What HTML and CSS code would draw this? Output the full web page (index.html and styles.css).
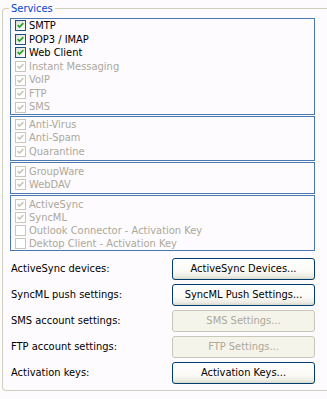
FILE: index.html
```html
<!DOCTYPE html>
<html>

<head>
	<meta charset="utf-8">
	<title>Services</title>
	<link rel="stylesheet" href="styles.css">
</head>

<body>

	<fieldset class="group">
		<legend class="group-title">Services</legend>

		<div class="box box-mail">
			<label class="item"><span class="check"><svg viewBox="0 0 11 11"><polyline points="2,5 4.3,7.3 9,2.6" /></svg></span>SMTP</label>
			<label class="item"><span class="check"><svg viewBox="0 0 11 11"><polyline points="2,5 4.3,7.3 9,2.6" /></svg></span>POP3 / IMAP</label>
			<label class="item"><span class="check"><svg viewBox="0 0 11 11"><polyline points="2,5 4.3,7.3 9,2.6" /></svg></span>Web Client</label>
			<label class="item off"><span class="check"><svg viewBox="0 0 11 11"><polyline points="2,5 4.3,7.3 9,2.6" /></svg></span>Instant Messaging</label>
			<label class="item off"><span class="check"><svg viewBox="0 0 11 11"><polyline points="2,5 4.3,7.3 9,2.6" /></svg></span>VoIP</label>
			<label class="item off"><span class="check"><svg viewBox="0 0 11 11"><polyline points="2,5 4.3,7.3 9,2.6" /></svg></span>FTP</label>
			<label class="item off"><span class="check"><svg viewBox="0 0 11 11"><polyline points="2,5 4.3,7.3 9,2.6" /></svg></span>SMS</label>
		</div>

		<div class="box box-av">
			<label class="item off"><span class="check"><svg viewBox="0 0 11 11"><polyline points="2,5 4.3,7.3 9,2.6" /></svg></span>Anti-Virus</label>
			<label class="item off"><span class="check"><svg viewBox="0 0 11 11"><polyline points="2,5 4.3,7.3 9,2.6" /></svg></span>Anti-Spam</label>
			<label class="item off"><span class="check"><svg viewBox="0 0 11 11"><polyline points="2,5 4.3,7.3 9,2.6" /></svg></span>Quarantine</label>
		</div>

		<div class="box box-gw">
			<label class="item off"><span class="check"><svg viewBox="0 0 11 11"><polyline points="2,5 4.3,7.3 9,2.6" /></svg></span>GroupWare</label>
			<label class="item off"><span class="check"><svg viewBox="0 0 11 11"><polyline points="2,5 4.3,7.3 9,2.6" /></svg></span>WebDAV</label>
		</div>

		<div class="box box-sync">
			<label class="item off"><span class="check"><svg viewBox="0 0 11 11"><polyline points="2,5 4.3,7.3 9,2.6" /></svg></span>ActiveSync</label>
			<label class="item off"><span class="check"><svg viewBox="0 0 11 11"><polyline points="2,5 4.3,7.3 9,2.6" /></svg></span>SyncML</label>
			<label class="item off"><span class="check"></span>Outlook Connector - Activation Key</label>
			<label class="item off"><span class="check"></span>Dektop Client - Activation Key</label>
		</div>

		<div class="actions">
			<div class="action">
				<span class="action-label">ActiveSync devices:</span>
				<button class="btn">ActiveSync Devices...</button>
			</div>
			<div class="action">
				<span class="action-label">SyncML push settings:</span>
				<button class="btn">SyncML Push Settings...</button>
			</div>
			<div class="action">
				<span class="action-label">SMS account settings:</span>
				<button class="btn" disabled>SMS Settings...</button>
			</div>
			<div class="action">
				<span class="action-label">FTP account settings:</span>
				<button class="btn" disabled>FTP Settings...</button>
			</div>
			<div class="action">
				<span class="action-label">Activation keys:</span>
				<button class="btn">Activation Keys...</button>
			</div>
		</div>
	</fieldset>

</body>

</html>
```

FILE: styles.css
```css
* {
	padding: 0px;
	margin: 0px;
	box-sizing: border-box;
}

body {
	background-color: #fdfbfe;
	font-family: "DejaVu Sans Condensed", "DejaVu Sans", sans-serif;
	font-stretch: condensed;
	font-size: 11px;
	color: #000;
}

/* group box (its right edge runs on past the window) */
.group {
	width: 325px;
	margin: 2px 0px 0px 2px;
	padding: 3px 0px 6px 7px;
	border: 1px solid #d0d0bf;
	border-right: none;
	border-radius: 4px 0px 0px 4px;
}

.group-title {
	margin-left: -1px;
	padding: 0px 2px;
	line-height: 13px;
	color: #0046d5;
}

.box {
	width: 305px;
	margin-bottom: 1px;
	border: 1px solid #4a79b1;
	display: flex;
	flex-direction: column;
}

.box-mail {
	--row: 13.57px;
}

.box-av {
	--row: 13.33px;
	padding: 1px 0px 2px;
}

.box-gw {
	--row: 13px;
	padding: 2px 0px 2px;
}

.box-sync {
	--row: 13px;
	padding-top: 2px;
}

/* check rows */
.item {
	height: var(--row);
	line-height: var(--row);
	display: flex;
	align-items: center;
	padding-left: 4px;
	white-space: nowrap;
}

.check {
	width: 11px;
	height: 11px;
	margin-right: 3px;
	border: 1px solid #1c5180;
	background: linear-gradient(135deg, #dcdcd7, #fff);
	display: flex;
	flex-shrink: 0;
}

.check svg {
	width: 9px;
	height: 9px;
}

.check polyline {
	fill: none;
	stroke: #21a121;
	stroke-width: 2;
}

.item.off {
	color: #aca899;
}

.item.off .check {
	border-color: #c9c7ba;
	background: #fff;
}

.item.off .check polyline {
	stroke: #cac8bb;
}

/* buttons */
.actions {
	width: 305px;
	margin-top: 7px;
	display: flex;
	flex-direction: column;
	gap: 4px;
}

.action {
	display: flex;
	align-items: center;
	justify-content: space-between;
}

.action-label {
	padding-left: 1px;
}

.btn {
	width: 143px;
	height: 22px;
	font: inherit;
	color: #000;
	border: 1px solid #003c74;
	border-radius: 3px;
	background: linear-gradient(to bottom, #fff 0%, #fbfaf6 60%, #ecebe3 88%, #d9d6c9 100%);
}

.btn:disabled {
	color: #aca899;
	border-color: #c9c7ba;
	background: #f5f4ea;
}
```
